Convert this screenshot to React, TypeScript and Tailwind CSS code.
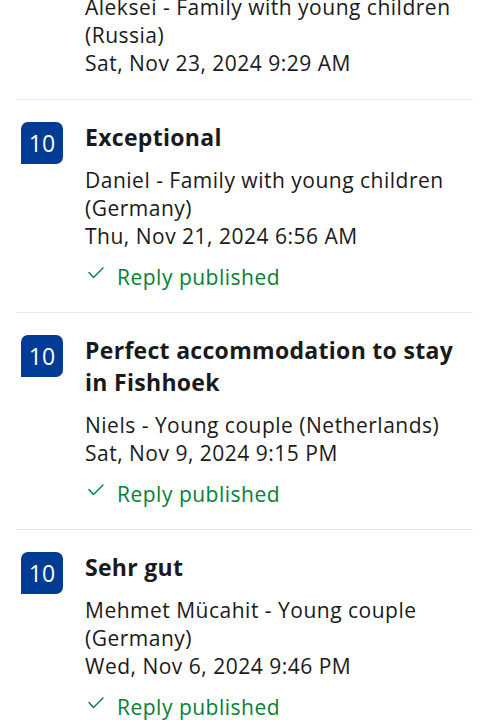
import React from "react";

type Review = {
  title?: string;
  body: string[];
  date: string;
  reply?: boolean;
};

const reviews: Review[] = [
  {
    title: "Exceptional",
    body: ["Daniel - Family with young children", "(Germany)"],
    date: "Thu, Nov 21, 2024 6:56 AM",
    reply: true,
  },
  {
    title: "Perfect accommodation to stay in Fishhoek",
    body: ["Niels - Young couple (Netherlands)"],
    date: "Sat, Nov 9, 2024 9:15 PM",
    reply: true,
  },
  {
    title: "Sehr gut",
    body: ["Mehmet Mücahit - Young couple", "(Germany)"],
    date: "Wed, Nov 6, 2024 9:46 PM",
    reply: true,
  },
];

function Check() {
  return (
    <svg width="16" height="12" viewBox="0 0 16 12" fill="none" className="shrink-0">
      <path d="M1 5.5 L5.5 10.5 L15 1" stroke="#008234" strokeWidth="1.4" strokeLinecap="round" strokeLinejoin="round" />
    </svg>
  );
}

function Item({ r }: { r: Review }) {
  return (
    <div className="flex pl-[21px] pr-[24px] pt-[22px] pb-[21px]">
      <div className="w-[42px] h-[42px] shrink-0 bg-[#003b95] rounded-tl-[7px] rounded-tr-[7px] rounded-br-[7px] flex items-center justify-center text-white text-[23px] leading-none">
        10
      </div>
      <div className="ml-[22px] flex-1">
        <div className="-mt-[1px] text-[23px] leading-[32px] tracking-[0.3px] font-bold text-[#1a1a1a]">{r.title}</div>
        <div className="mt-[13px] text-[21px] leading-[28px] tracking-[0.5px] text-[#1a1a1a]">
          {r.body.map((b, i) => (
            <div key={i}>{b}</div>
          ))}
          <div>{r.date}</div>
        </div>
        {r.reply && (
          <div className="mt-[13px] flex items-center h-[28px] text-[21px] leading-[28px] tracking-[0.5px] text-[#008234]">
            <span className="w-[32px] flex -mt-[8px] pl-[3px]">
              <Check />
            </span>
            <span>Reply published</span>
          </div>
        )}
      </div>
    </div>
  );
}

export default function App() {
  return (
    <div
      className="w-[489px] h-[720px] overflow-hidden bg-white"
      style={{ fontFamily: "'Open Sans', 'Noto Sans', sans-serif" }}
    >
      <div className="-mt-[7px] pl-[85px] pb-[22px] text-[21px] leading-[28px] tracking-[0.5px] text-[#1a1a1a]">
        <div>Aleksei - Family with young children</div>
        <div>(Russia)</div>
        <div>Sat, Nov 23, 2024 9:29 AM</div>
      </div>
      {reviews.map((r, i) => (
        <React.Fragment key={i}>
          <div className="h-px bg-[#e7e7e7] ml-[16px] mr-[16px]" />
          <Item r={r} />
        </React.Fragment>
      ))}
    </div>
  );
}
